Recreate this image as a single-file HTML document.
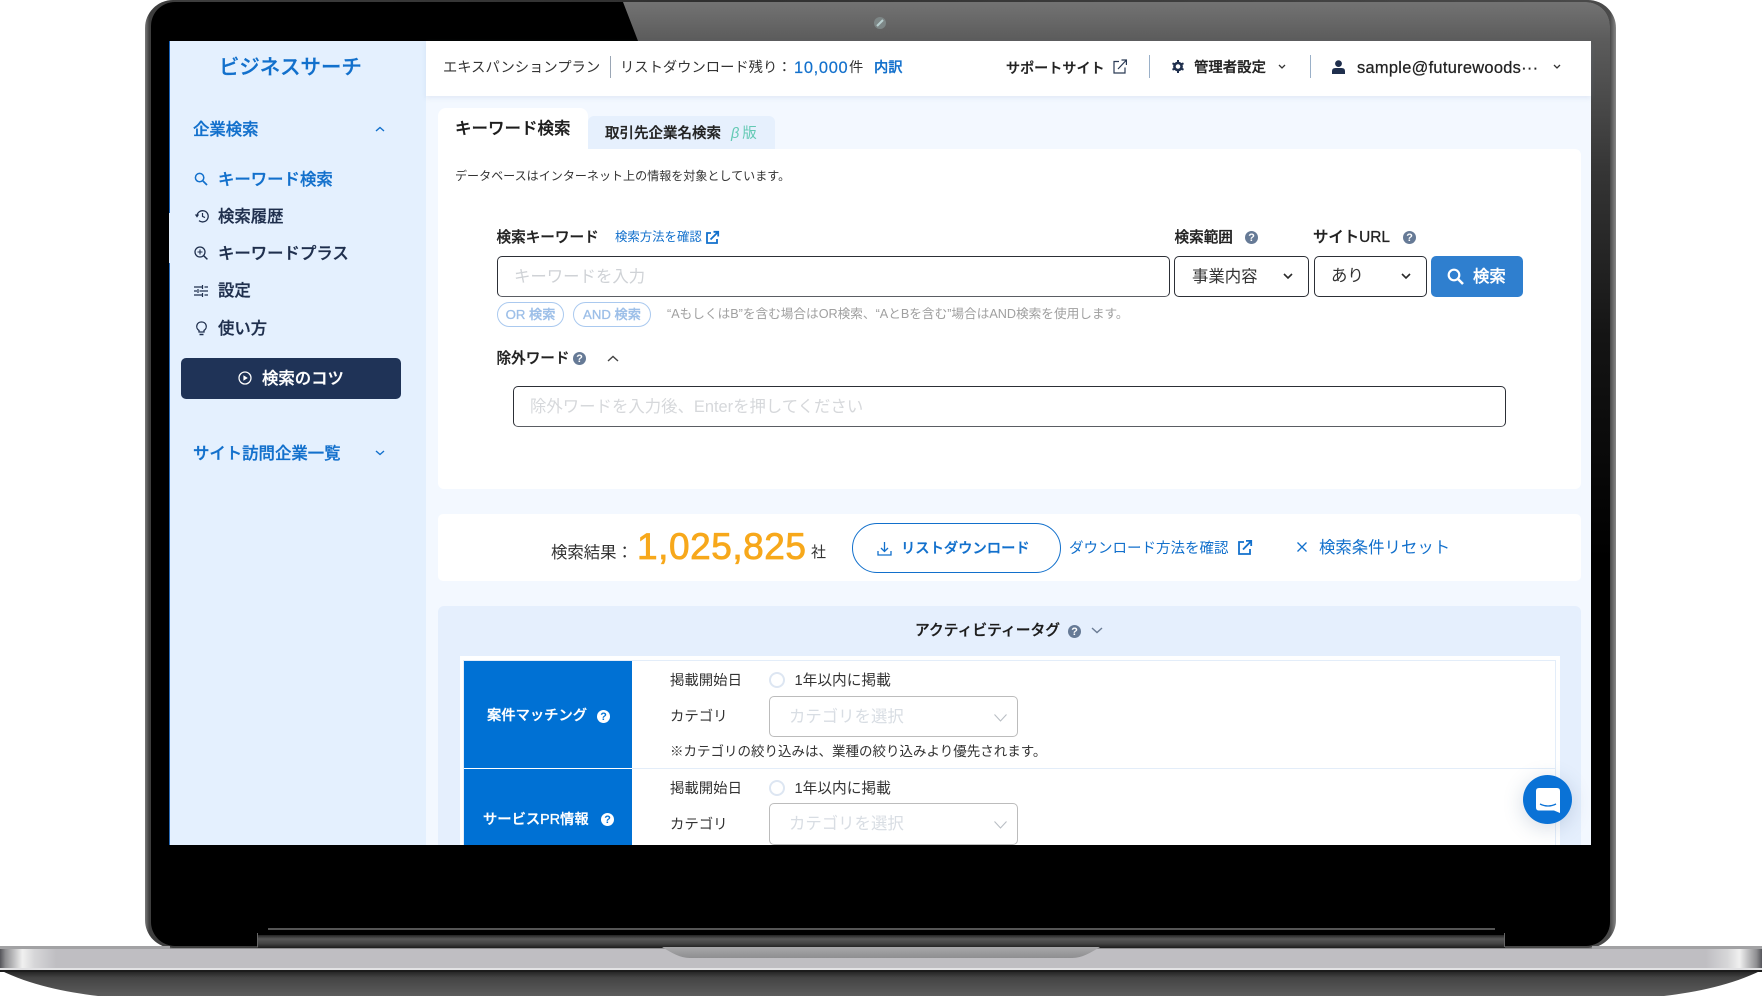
<!DOCTYPE html>
<html lang="ja"><head><meta charset="utf-8"><title>ビジネスサーチ</title>
<style>
html,body{margin:0;padding:0;background:#fff;width:1762px;height:996px;overflow:hidden}
body{position:relative;font-family:"Liberation Sans","Noto Sans CJK JP",sans-serif;color:#1d1d1f}
.a{position:absolute}
.t{position:absolute;white-space:nowrap;line-height:20px;height:20px;margin-top:1px}
.m{font-weight:500;-webkit-text-stroke:.3px currentColor}
.blue{color:#1270cc}
.nav{color:#1f2f4d;font-size:16.4px;font-weight:500;left:218px;-webkit-text-stroke:.3px currentColor}
.lb{font-size:14.6px;font-weight:500;color:#222;-webkit-text-stroke:.3px currentColor}
.dr{font-size:14.4px;color:#333}
.sel{position:absolute;box-sizing:border-box;background:#fff;border:1px solid #2c2f36;border-radius:5px}
svg{position:absolute;overflow:visible}
.ph{font-size:16.4px;color:#cfd2d6}
.cs{position:absolute;box-sizing:border-box;left:769px;width:249px;background:#fff;border:1px solid #bcbcbc;border-radius:5px}
</style></head><body>

<!-- laptop frame -->
<svg class="a" style="left:0;top:0" width="1762" height="996" viewBox="0 0 1762 996">
<defs>
<linearGradient id="refl" x1="0" y1="0" x2="0" y2="560" gradientUnits="userSpaceOnUse"><stop offset="0" stop-color="#747474"/><stop offset=".07" stop-color="#5c5c5c"/><stop offset=".3" stop-color="#363636"/><stop offset=".6" stop-color="#141414"/><stop offset="1" stop-color="#000"/></linearGradient>
<linearGradient id="rim" x1="0" y1="0" x2="1" y2="0"><stop offset="0" stop-color="#7a7a7a"/><stop offset=".003" stop-color="#3e3e3e"/><stop offset=".38" stop-color="#2f2f2f"/><stop offset=".996" stop-color="#4a4a4a"/><stop offset="1" stop-color="#888"/></linearGradient>
<linearGradient id="tip" x1="0" x2="1"><stop offset="0" stop-color="#55555a"/><stop offset=".1" stop-color="#8f8f92"/><stop offset=".4" stop-color="#f0f0f0"/><stop offset=".62" stop-color="#d6d6d8"/><stop offset="1" stop-color="#bfbec2"/></linearGradient>
<linearGradient id="tipr" x1="1" x2="0"><stop offset="0" stop-color="#55555a"/><stop offset=".1" stop-color="#8f8f92"/><stop offset=".4" stop-color="#f0f0f0"/><stop offset=".62" stop-color="#d6d6d8"/><stop offset="1" stop-color="#bfbec2"/></linearGradient>
<linearGradient id="bot" x1="0" x2="0" y1="0" y2="1"><stop offset="0" stop-color="#1c1c1c"/><stop offset=".3" stop-color="#444"/><stop offset="1" stop-color="#5c5c5c"/></linearGradient>
<linearGradient id="notch" x1="0" x2="0" y1="0" y2="1"><stop offset="0" stop-color="#a8a8aa"/><stop offset="1" stop-color="#8e8e90"/></linearGradient>
<linearGradient id="band" x1="0" x2="0" y1="0" y2="1"><stop offset="0" stop-color="#222"/><stop offset=".3" stop-color="#585858"/><stop offset=".65" stop-color="#444"/><stop offset="1" stop-color="#1c1c1c"/></linearGradient>
<clipPath id="inner"><rect x="151" y="2" width="1459" height="944" rx="24"/></clipPath>
</defs>
<rect x="145" y="0" width="1471" height="948" rx="28" fill="url(#rim)"/>
<rect x="151" y="2" width="1459" height="944" rx="24" fill="#000"/>
<path d="M623 2H1610V580H1591V41H638Z" fill="url(#refl)" clip-path="url(#inner)"/>
<circle cx="880" cy="23" r="6" fill="#7d8686"/><path d="M877 26L883 20" stroke="#b9d0d0" stroke-width="2"/>
<!-- hinge -->
<rect x="268" y="928" width="1227" height="2" fill="#555"/>
<rect x="258" y="935" width="1247" height="13" fill="url(#band)"/>
<rect x="257" y="933" width="1" height="14" fill="#666"/>
<rect x="1504" y="933" width="1" height="14" fill="#666"/>
<!-- base -->
<path d="M0 970C30 985 65 992 98 996H1664C1697 992 1732 985 1762 970Z" fill="url(#bot)"/>
<rect x="0" y="946" width="170" height="4" fill="#a2a2a4"/>
<rect x="1592" y="946" width="170" height="4" fill="#a2a2a4"/>
<rect x="170" y="948" width="1422" height="2" fill="#8e8e90"/>
<rect x="0" y="949" width="1762" height="20" fill="#bfbec2"/>
<rect x="0" y="949" width="56" height="20" fill="url(#tip)"/>
<rect x="1706" y="949" width="56" height="20" fill="url(#tipr)"/>
<rect x="0" y="968" width="1762" height="2" fill="#e2e2e4"/>
<rect x="0" y="970" width="1762" height="2" fill="#1c1c1c"/>
<path d="M662 947H1100C1090 953 1082 958 1072 958H690C680 958 672 953 662 947Z" fill="url(#notch)"/>
</svg>

<!-- screen -->
<div class="a" style="left:170px;top:41px;width:1421px;height:804px;background:#f3f8ff;overflow:hidden"></div>
<div class="a" style="left:170px;top:41px;width:256px;height:804px;background:#e4f0fe"></div>
<div class="a" style="left:169px;top:41px;width:1px;height:172px;background:#1a63b8"></div>
<div class="a" style="left:169px;top:213px;width:1px;height:50px;background:#e4f0fe"></div>
<div class="a" style="left:169px;top:263px;width:1px;height:582px;background:#2a6cb8"></div>
<div class="a" style="left:426px;top:41px;width:1165px;height:55px;background:#fff;box-shadow:0 2px 5px rgba(120,150,190,.15)"></div>

<!-- sidebar -->
<div class="t blue m" style="left:219px;top:57px;font-size:20.4px">ビジネスサーチ</div>
<div class="t blue m" style="left:193px;top:119px;font-size:16.4px">企業検索</div>
<svg style="left:375px;top:126px" width="10" height="6"><path d="M1 5L5 1.5L9 5" fill="none" stroke="#1270cc" stroke-width="1.4"/></svg>
<svg style="left:194px;top:172px" width="14" height="14"><circle cx="5.6" cy="5.6" r="4.2" fill="none" stroke="#1270cc" stroke-width="1.5"/><path d="M9 9L13 13" stroke="#1270cc" stroke-width="1.7"/></svg>
<div class="t nav" style="top:169px;color:#1270cc">キーワード検索</div>
<svg style="left:194px;top:209px" width="15" height="14"><path d="M3 7A5.6 5.6 0 1 1 5 11.6" fill="none" stroke="#1f2f4d" stroke-width="1.3"/><path d="M0.8 5.5H5.2L3 8.6Z" fill="#1f2f4d"/><path d="M8.5 4V7.4L11 8.6" fill="none" stroke="#1f2f4d" stroke-width="1.2"/></svg>
<div class="t nav" style="top:206px">検索履歴</div>
<svg style="left:194px;top:246px" width="14" height="14"><circle cx="6" cy="6" r="5" fill="none" stroke="#1f2f4d" stroke-width="1.3"/><path d="M9.6 9.6L13.4 13.4" stroke="#1f2f4d" stroke-width="1.5"/><path d="M3.5 6H8.5M6 3.5V8.5" stroke="#1f2f4d" stroke-width="1.1"/></svg>
<div class="t nav" style="top:243px">キーワードプラス</div>
<svg style="left:194px;top:285px" width="14" height="12"><path d="M0 2H8M10.5 2H14M0 6H3M5.5 6H14M0 10H8M10.5 10H14M8.5 0V4M4 4V8M8.5 8V12" stroke="#1f2f4d" stroke-width="1.2"/></svg>
<div class="t nav" style="top:280px">設定</div>
<svg style="left:196px;top:321px" width="11" height="15"><path d="M5.5 1A4.5 4.5 0 0 1 8 9.4V11H3V9.4A4.5 4.5 0 0 1 5.5 1Z" fill="none" stroke="#1f2f4d" stroke-width="1.3"/><path d="M3.5 13.5H7.5" stroke="#1f2f4d" stroke-width="1.5"/></svg>
<div class="t nav" style="top:318px">使い方</div>
<div class="a" style="left:181px;top:358px;width:220px;height:41px;background:#1f3357;border-radius:5px"></div>
<svg style="left:238px;top:371px" width="14" height="14"><circle cx="7" cy="7" r="6" fill="none" stroke="#fff" stroke-width="1.3"/><path d="M5.4 4.2L9.8 7L5.4 9.8Z" fill="#fff"/></svg>
<div class="t m" style="left:262px;top:368px;font-size:16.4px;color:#fff">検索のコツ</div>
<div class="t blue m" style="left:193px;top:443px;font-size:16.4px">サイト訪問企業一覧</div>
<svg style="left:375px;top:450px" width="10" height="6"><path d="M1 1L5 4.5L9 1" fill="none" stroke="#1270cc" stroke-width="1.4"/></svg>

<!-- header -->
<div class="t" style="left:443px;top:57px;font-size:14.3px;color:#333">エキスパンションプラン</div>
<div class="a" style="left:610px;top:56px;width:1px;height:22px;background:#9aa6b5"></div>
<div class="t" style="left:620px;top:57px;font-size:14.3px;color:#333">リストダウンロード残り：</div>
<div class="t blue" style="left:794px;top:57px;font-size:16.4px;letter-spacing:.7px;-webkit-text-stroke:.2px currentColor">10,000</div>
<div class="t" style="left:849px;top:57px;font-size:14.3px;color:#333">件</div>
<div class="t blue m" style="left:874px;top:57px;font-size:14.3px">内訳</div>
<div class="t m" style="left:1006px;top:57px;font-size:14.1px;color:#222">サポートサイト</div>
<svg style="left:1113px;top:59px" width="14" height="15"><path d="M6 2.5H1V14H12V8.5" fill="none" stroke="#2a3a55" stroke-width="1.2"/><path d="M5 10L13 1.5M8.5 1H13.4V6" fill="none" stroke="#2a3a55" stroke-width="1.2"/></svg>
<div class="a" style="left:1149px;top:55px;width:1px;height:23px;background:#9ab0c8"></div>
<svg style="left:1172px;top:60px" width="12" height="13"><circle cx="6" cy="6.5" r="3.6" fill="none" stroke="#1f2f4d" stroke-width="2.6"/><path d="M6 0V2M6 11V13M0.5 3.3L2.3 4.3M9.7 8.7L11.5 9.7M0.5 9.7L2.3 8.7M9.7 4.3L11.5 3.3" stroke="#1f2f4d" stroke-width="2"/></svg>
<div class="t m" style="left:1194px;top:57px;font-size:14.4px;color:#222">管理者設定</div>
<svg style="left:1278px;top:64px" width="8" height="6"><path d="M1 1L4 4L7 1" fill="none" stroke="#333" stroke-width="1.3"/></svg>
<div class="a" style="left:1310px;top:55px;width:1px;height:23px;background:#9ab0c8"></div>
<svg style="left:1332px;top:60px" width="13" height="14"><circle cx="6.5" cy="3.6" r="3.4" fill="#1f2f4d"/><path d="M0 14V11Q0 8 3.5 8H9.5Q13 8 13 11V14Z" fill="#1f2f4d"/></svg>
<div class="t" style="left:1357px;top:57px;font-size:16.4px;color:#222;-webkit-text-stroke:.25px #222;letter-spacing:.3px">sample@futurewoods···</div>
<svg style="left:1553px;top:64px" width="8" height="6"><path d="M1 1L4 4L7 1" fill="none" stroke="#333" stroke-width="1.3"/></svg>

<!-- tabs -->
<div class="a" style="left:588px;top:116px;width:187px;height:40px;background:#e6f0fd;border-radius:6px 6px 0 0"></div>
<div class="a" style="left:438px;top:108px;width:150px;height:48px;background:#fff;border-radius:8px 8px 0 0"></div>
<div class="t m" style="left:455px;top:118px;font-size:16.5px;color:#1c1c1c">キーワード検索</div>
<div class="t m" style="left:605px;top:123px;font-size:14.5px;color:#222">取引先企業名検索</div>
<div class="t" style="left:731px;top:123px;font-size:14.5px;color:#63c9b4"><i>β</i>&#8201;版</div>

<!-- search card -->
<div class="a" style="left:438px;top:149px;width:1143px;height:340px;background:#fff;border-radius:0 6px 6px 6px"></div>
<div class="t" style="left:455px;top:165px;font-size:12.05px;color:#333">データベースはインターネット上の情報を対象としています。</div>
<div class="t lb" style="left:496.5px;top:227px">検索キーワード</div>
<div class="t blue" style="left:615px;top:226px;font-size:12.4px">検索方法を確認</div>
<svg style="left:706px;top:231px" width="13" height="13"><path d="M5 2H1V12H11V8" fill="none" stroke="#1270cc" stroke-width="1.8"/><path d="M4.5 8.5L12 1M7.5 .8H12.2V5.5" fill="none" stroke="#1270cc" stroke-width="1.8"/></svg>
<div class="sel" style="left:497px;top:256px;width:673px;height:41px;border-bottom-color:#5a5d63;border-bottom-width:1.5px"></div>
<div class="t ph" style="left:514px;top:266px">キーワードを入力</div>
<div class="t lb" style="left:1174.5px;top:227px">検索範囲</div>
<svg style="left:1244.5px;top:230.5px" width="13" height="13" viewBox="0 0 12 12"><circle cx="6" cy="6" r="6" fill="#667a96"/><text x="6" y="9.4" text-anchor="middle" font-size="10" font-weight="700" fill="#fff" font-family="Liberation Sans">?</text></svg>
<div class="t lb" style="left:1313px;top:227px;font-size:15.4px">サイトURL</div>
<svg style="left:1402.5px;top:230.5px" width="13" height="13" viewBox="0 0 12 12"><circle cx="6" cy="6" r="6" fill="#667a96"/><text x="6" y="9.4" text-anchor="middle" font-size="10" font-weight="700" fill="#fff" font-family="Liberation Sans">?</text></svg>
<div class="sel" style="left:1174px;top:256px;width:135px;height:41px"></div>
<div class="t" style="left:1192px;top:266px;font-size:16.4px;color:#333">事業内容</div>
<svg style="left:1283px;top:273px" width="10" height="7"><path d="M1 1L5 5L9 1" fill="none" stroke="#2a2a2a" stroke-width="1.6"/></svg>
<div class="sel" style="left:1314px;top:256px;width:113px;height:41px"></div>
<div class="t" style="left:1331px;top:265px;font-size:16.4px;color:#333">あり</div>
<svg style="left:1401px;top:273px" width="10" height="7"><path d="M1 1L5 5L9 1" fill="none" stroke="#2a2a2a" stroke-width="1.6"/></svg>
<div class="a" style="left:1431px;top:256px;width:92px;height:41px;background:#2f7fcf;border-radius:5px"></div>
<svg style="left:1447px;top:268px" width="17" height="17"><circle cx="7" cy="7" r="5.3" fill="none" stroke="#fff" stroke-width="2.2"/><path d="M11 11L16 16" stroke="#fff" stroke-width="2.6"/></svg>
<div class="t m" style="left:1473px;top:266px;font-size:16.4px;color:#fff">検索</div>

<div class="a" style="left:497px;top:302px;width:67px;height:25px;box-sizing:border-box;border:1px solid #aac9ef;border-radius:13px;background:#fff;text-align:center;line-height:23px;font-size:13.2px;color:#9dbfe8;font-weight:500;white-space:nowrap;-webkit-text-stroke:.3px currentColor">OR 検索</div>
<div class="a" style="left:573px;top:302px;width:78px;height:25px;box-sizing:border-box;border:1px solid #aac9ef;border-radius:13px;background:#fff;text-align:center;line-height:23px;font-size:13.2px;color:#9dbfe8;font-weight:500;white-space:nowrap;-webkit-text-stroke:.3px currentColor">AND 検索</div>
<div class="t" style="left:667px;top:303px;font-size:12.65px;color:#a0a0a0">“AもしくはB”を含む場合はOR検索、“AとBを含む”場合はAND検索を使用します。</div>

<div class="t lb" style="left:496.5px;top:348px">除外ワード</div>
<svg style="left:572.5px;top:351.5px" width="13" height="13" viewBox="0 0 12 12"><circle cx="6" cy="6" r="6" fill="#667a96"/><text x="6" y="9.4" text-anchor="middle" font-size="10" font-weight="700" fill="#fff" font-family="Liberation Sans">?</text></svg>
<svg style="left:607px;top:355px" width="12" height="7"><path d="M1 6L6 1.5L11 6" fill="none" stroke="#444" stroke-width="1.4"/></svg>
<div class="sel" style="left:513px;top:386px;width:993px;height:41px;border-bottom-color:#5a5d63;border-bottom-width:1.5px"></div>
<div class="t ph" style="left:530px;top:396px;color:#d6d8db">除外ワードを入力後、Enterを押してください</div>

<!-- result card -->
<div class="a" style="left:438px;top:514px;width:1143px;height:67px;background:#fff;border-radius:5px"></div>
<div class="t" style="left:551px;top:542px;font-size:16.4px;color:#333">検索結果：</div>
<div class="t" style="left:637px;top:526px;height:40px;line-height:40px;font-size:37px;letter-spacing:.55px;color:#f7a81b;-webkit-text-stroke:.8px #f7a81b">1,025,825</div>
<div class="t" style="left:811px;top:542px;font-size:15px;color:#333">社</div>
<div class="a" style="left:852px;top:523px;width:209px;height:50px;box-sizing:border-box;background:#fff;border:1.4px solid #1270cc;border-radius:25px"></div>
<svg style="left:877px;top:541px" width="15" height="15"><path d="M7.5 1V10M4 7L7.5 10.5L11 7" fill="none" stroke="#1270cc" stroke-width="1.3"/><path d="M1 10V14H14V10" fill="none" stroke="#1270cc" stroke-width="1.3"/></svg>
<div class="t blue m" style="left:901px;top:538px;font-size:14.3px">リストダウンロード</div>
<div class="t blue" style="left:1069px;top:538px;font-size:14.5px">ダウンロード方法を確認</div>
<svg style="left:1238px;top:540px" width="14" height="15"><path d="M6 2H1V14H12V9" fill="none" stroke="#1270cc" stroke-width="1.8"/><path d="M5 9.5L13 1.2M8 .9H13.2V6" fill="none" stroke="#1270cc" stroke-width="1.8"/></svg>
<svg style="left:1297px;top:542px" width="10" height="10"><path d="M.5 .5L9.5 9.5M9.5 .5L.5 9.5" stroke="#1270cc" stroke-width="1.3"/></svg>
<div class="t blue" style="left:1319px;top:537px;font-size:16.4px">検索条件リセット</div>

<!-- activity panel -->
<div class="a" style="left:438px;top:606px;width:1143px;height:239px;background:#e5effd;border-radius:6px 6px 0 0"></div>
<div class="t lb" style="left:915px;top:620px;color:#1c1c1c;font-size:14.75px">アクティビティータグ</div>
<svg style="left:1068px;top:624.5px" width="13" height="13" viewBox="0 0 12 12"><circle cx="6" cy="6" r="6" fill="#667a96"/><text x="6" y="9.4" text-anchor="middle" font-size="10" font-weight="700" fill="#fff" font-family="Liberation Sans">?</text></svg>
<svg style="left:1091px;top:627px" width="12" height="7"><path d="M1 1L6 5.5L11 1" fill="none" stroke="#6b7c94" stroke-width="1.4"/></svg>
<div class="a" style="left:460px;top:656px;width:1100px;height:189px;background:#fff"></div>
<div class="a" style="left:463px;top:660px;width:1093px;height:185px;box-sizing:border-box;border:1px solid #e3edf9;border-bottom:0"></div>
<div class="a" style="left:632px;top:768px;width:924px;height:1px;background:#e3edf9"></div>
<div class="a" style="left:464px;top:661px;width:168px;height:107px;background:#0071d4"></div>
<div class="a" style="left:464px;top:769px;width:168px;height:76px;background:#0071d4"></div>
<div class="t m" style="left:487px;top:705px;font-size:14.3px;color:#fff">案件マッチング</div>
<svg style="left:596.5px;top:709.5px" width="13" height="13" viewBox="0 0 12 12"><circle cx="6" cy="6" r="6" fill="#fff"/><text x="6" y="9.4" text-anchor="middle" font-size="10" font-weight="700" fill="#0071d4" font-family="Liberation Sans">?</text></svg>
<div class="t m" style="left:483px;top:809px;font-size:14.3px;color:#fff">サービスPR情報</div>
<svg style="left:600.5px;top:813px" width="13" height="13" viewBox="0 0 12 12"><circle cx="6" cy="6" r="6" fill="#fff"/><text x="6" y="9.4" text-anchor="middle" font-size="10" font-weight="700" fill="#0071d4" font-family="Liberation Sans">?</text></svg>

<div class="t dr" style="left:670px;top:670px">掲載開始日</div>
<div class="a" style="left:769px;top:672px;width:16px;height:16px;box-sizing:border-box;border:2px solid #dde6f2;border-radius:50%"></div>
<div class="t dr" style="left:794.5px;top:670px;font-size:14.7px">1年以内に掲載</div>
<div class="t dr" style="left:670px;top:706px">カテゴリ</div>
<div class="cs" style="top:696px;height:41px"></div>
<div class="t ph" style="left:789px;top:706px;color:#d8dde3">カテゴリを選択</div>
<svg style="left:994px;top:714px" width="13" height="8"><path d="M.5 .5L6.5 7L12.5 .5" fill="none" stroke="#b9bec4" stroke-width="1.1"/></svg>
<div class="t" style="left:670px;top:741px;font-size:13.5px;color:#333">※カテゴリの絞り込みは、業種の絞り込みより優先されます。</div>

<div class="t dr" style="left:670px;top:778px">掲載開始日</div>
<div class="a" style="left:769px;top:780px;width:16px;height:16px;box-sizing:border-box;border:2px solid #dde6f2;border-radius:50%"></div>
<div class="t dr" style="left:794.5px;top:778px;font-size:14.7px">1年以内に掲載</div>
<div class="t dr" style="left:670px;top:814px">カテゴリ</div>
<div class="cs" style="top:803px;height:42px;border-top-width:1.5px"></div>
<div class="t ph" style="left:789px;top:813px;color:#d8dde3">カテゴリを選択</div>
<svg style="left:994px;top:821px" width="13" height="8"><path d="M.5 .5L6.5 7L12.5 .5" fill="none" stroke="#b9bec4" stroke-width="1.1"/></svg>

<!-- chat -->
<div class="a" style="left:1523px;top:775px;width:49px;height:49px;border-radius:50%;background:#0a72d6;box-shadow:0 4px 20px rgba(60,90,130,.22)"></div>
<svg style="left:1536px;top:788px" width="24" height="25"><path d="M3 0H21Q24 0 24 3V25L18 22.5H3Q0 22.5 0 19.5V3Q0 0 3 0Z" fill="#fff"/><path d="M4 16Q12 20 20 16" fill="none" stroke="#0a72d6" stroke-width="1.3"/></svg>

</body></html>
